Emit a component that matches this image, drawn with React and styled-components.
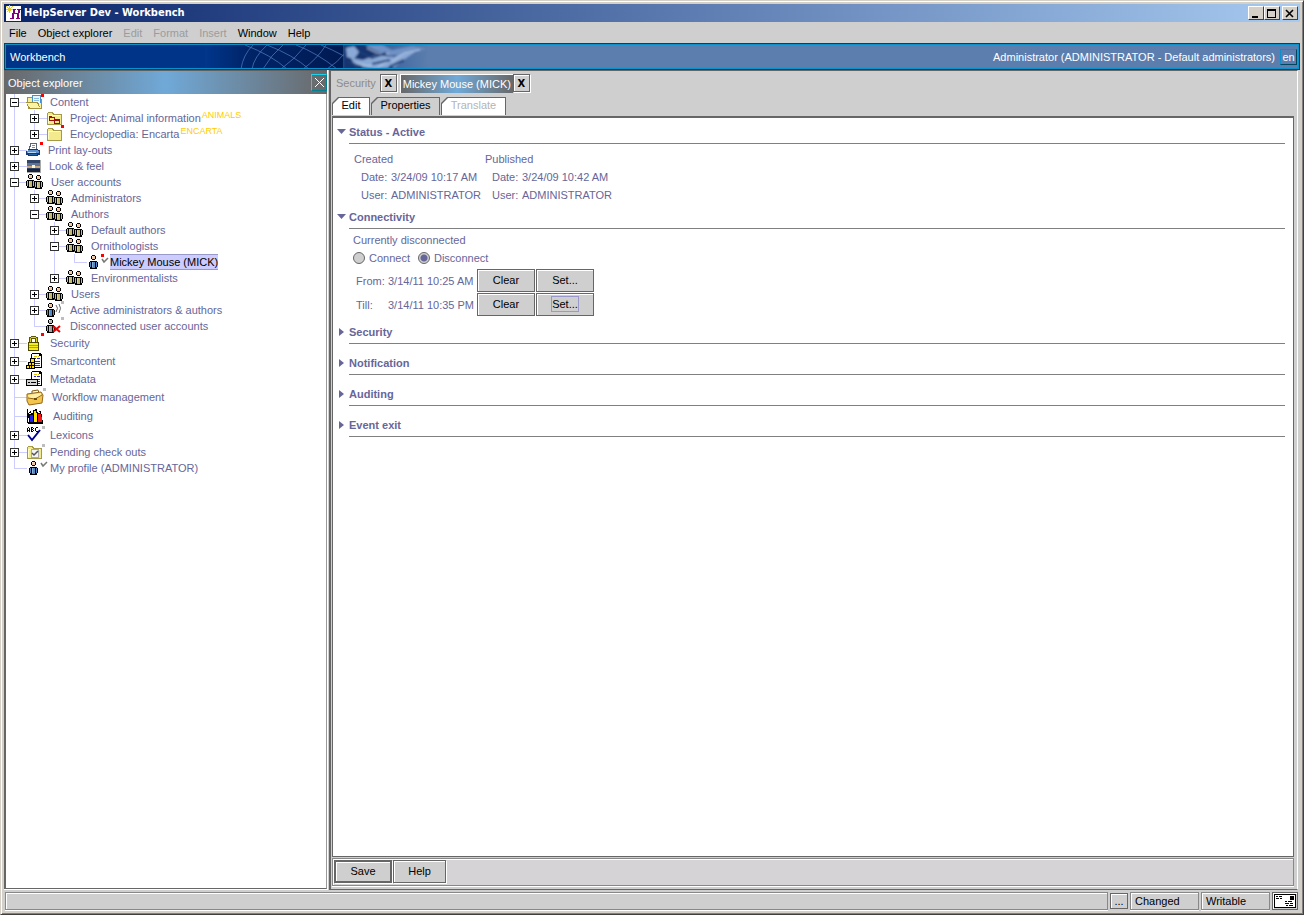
import { useState } from "react";
import styled, { createGlobalStyle, css } from "styled-components";

const tree = [
    {
        label: "Content", icon: "content", open: true, children: [
            { label: "Project: Animal information", code: "ANIMALS", icon: "project", children: [] },
            { label: "Encyclopedia: Encarta", code: "ENCARTA", icon: "folder", children: [] },
        ]
    },
    { label: "Print lay-outs", icon: "printer", children: [] },
    { label: "Look & feel", icon: "look", children: [] },
    {
        label: "User accounts", icon: "group", open: true, children: [
            { label: "Administrators", icon: "group", children: [] },
            {
                label: "Authors", icon: "group", open: true, children: [
                    { label: "Default authors", icon: "group", children: [] },
                    { label: "Ornithologists", icon: "group", open: true, children: [{ label: "Mickey Mouse (MICK)", icon: "userChanged" }] },
                    { label: "Environmentalists", icon: "group", children: [] },
                ]
            },
            { label: "Users", icon: "group", children: [] },
            { label: "Active administrators & authors", icon: "active", children: [] },
            { label: "Disconnected user accounts", icon: "disconnected" },
        ]
    },
    { label: "Security", icon: "lock", size: 18, children: [] },
    { label: "Smartcontent", icon: "smart", size: 18, children: [] },
    { label: "Metadata", icon: "metadata", size: 18, children: [] },
    { label: "Workflow management", icon: "briefcase", size: 18 },
    { label: "Auditing", icon: "books", size: 20 },
    { label: "Lexicons", icon: "lexicon", size: 18, children: [] },
    { label: "Pending check outs", icon: "pending", children: [] },
    { label: "My profile (ADMINISTRATOR)", icon: "user" },
];

const menus = [
    { label: "File" }, { label: "Object explorer" }, { label: "Edit", disabled: true }, { label: "Format", disabled: true },
    { label: "Insert", disabled: true }, { label: "Window" }, { label: "Help" },
];

export default function App() {
    const [selected, setSelected] = useState("Mickey Mouse (MICK)");
    const [connected, setConnected] = useState(false);

    return (
        <Window>
            <GlobalStyle />
            <TitleBar>
                <AppLogo />
                <Title>HelpServer Dev - Workbench</Title>
                <WindowButton aria-label="Minimize"><svg width="10" height="9"><path d="M1 7h6v2H1z" /></svg></WindowButton>
                <WindowButton aria-label="Maximize"><svg width="10" height="9"><path fillRule="evenodd" d="M0 0h9v9H0zM1 2v6h7V2z" /></svg></WindowButton>
                <WindowButton aria-label="Close" $last><svg width="10" height="9"><path d="M1 1l7 7M8 1l-7 7" stroke="#000" strokeWidth="1.6" /></svg></WindowButton>
            </TitleBar>
            <MenuBar>
                {menus.map(menu => <MenuItem key={menu.label} disabled={menu.disabled}>{menu.label}</MenuItem>)}
            </MenuBar>
            <Banner>
                <BannerTitle>Workbench</BannerTitle>
                <BannerArt />
                <BannerUser>Administrator (ADMINISTRATOR - Default administrators)</BannerUser>
                <Language>en</Language>
            </Banner>
            <Body>
                <Explorer>
                    <ExplorerHeader>
                        <ExplorerTitle>Object explorer</ExplorerTitle>
                        <ExplorerClose aria-label="Close explorer">
                            <svg width="11" height="11"><path d="M1 1l9 9M10 1l-9 9" stroke="#fff" /></svg>
                        </ExplorerClose>
                    </ExplorerHeader>
                    <TreePane>
                        <Branch>
                            {tree.map((node, i) => <TreeNode key={node.label} node={node} last={i === tree.length - 1} selected={selected} onSelect={setSelected} />)}
                        </Branch>
                    </TreePane>
                </Explorer>
                <Editor>
                    <Documents>
                        <DocumentTab>Security</DocumentTab>
                        <CloseTab aria-label="Close Security">X</CloseTab>
                        <DocumentTab $active>Mickey Mouse (MICK)</DocumentTab>
                        <CloseTab aria-label="Close Mickey Mouse">X</CloseTab>
                    </Documents>
                    <PageTabs>
                        <PageTab><PageTabFace $size={36} $white>Edit</PageTabFace></PageTab>
                        <PageTab><PageTabFace $size={67}>Properties</PageTabFace></PageTab>
                        <PageTab disabled><PageTabFace $size={63} $white $off>Translate</PageTabFace></PageTab>
                    </PageTabs>
                    <Page>
                        <Section title="Status - Active" open>
                            <StatusBody>
                                <StatusBlock title="Created" date="3/24/09 10:17 AM" />
                                <StatusBlock title="Published" date="3/24/09 10:42 AM" />
                            </StatusBody>
                        </Section>
                        <Section title="Connectivity" open>
                            <ConnectBody>
                                <Line>Currently disconnected</Line>
                                <Line>
                                    <RadioLabel><Radio name="connect" checked={connected} onChange={() => setConnected(true)} />Connect</RadioLabel>
                                    <RadioLabel><Radio name="connect" checked={!connected} onChange={() => setConnected(false)} />Disconnect</RadioLabel>
                                </Line>
                                <Period>
                                    <span>From:</span><span>3/14/11 10:25 AM</span>
                                    <Button>Clear</Button><Button>Set...</Button>
                                    <span>Till:</span><span>3/14/11 10:35 PM</span>
                                    <Button>Clear</Button><Button><Focus>Set...</Focus></Button>
                                </Period>
                            </ConnectBody>
                        </Section>
                        <Section title="Security" />
                        <Section title="Notification" />
                        <Section title="Auditing" />
                        <Section title="Event exit" />
                    </Page>
                    <Actions>
                        <Button $primary>Save</Button>
                        <Button $small>Help</Button>
                    </Actions>
                </Editor>
            </Body>
            <StatusBar>
                <StatusMessage />
                <MoreButton>...</MoreButton>
                <StatusCell>Changed</StatusCell>
                <StatusCell>Writable</StatusCell>
                <MailCell aria-label="Messages">
                    <svg width="22" height="14" shapeRendering="crispEdges">
                        <path d="M0 0h22v14H0z" /><path fill="#fff" d="M1 1h20v12H1z" />
                        <path d="M16 2h4v4h-4zM2 2h2v1H2zM5 2h3v1H5zM2 4h3v1H2zM6 4h2v1H6zM11 7h2v1h-2zM14 7h4v1h-4zM11 9h4v1h-4zM16 9h3v1h-3zM12 11h2v1h-2zM15 11h4v1h-4z" />
                    </svg>
                </MailCell>
            </StatusBar>
        </Window>
    )
}

function TreeNode({ node, last, selected, onSelect }) {
    const [open, setOpen] = useState(!!node.open);
    const { label, code, icon, size = 16, children } = node;

    return (
        <Node $last={last} $size={size}>
            <Row $size={size}>
                <Slot>
                    {children && (
                        <Expander aria-label={open ? `Collapse ${label}` : `Expand ${label}`} onClick={() => setOpen(!open)}>
                            <svg width="9" height="9" shapeRendering="crispEdges">
                                <path fill="#333" d="M0 0h9v9H0z" /><path fill="#fff" d="M1 1h7v7H1z" />
                                <path fill="#000" d={open ? "M2 4h5v1H2z" : "M2 4h5v1H2zM4 2h1v5H4z"} />
                            </svg>
                        </Expander>
                    )}
                </Slot>
                <Icon name={icon} />
                <Label $selected={selected === label} onClick={() => onSelect(label)}>{label}</Label>
                {code && <Code>{code}</Code>}
            </Row>
            {open && children.length > 0 && (
                <Branch $nested>
                    {children.map((child, i) => <TreeNode key={child.label} node={child} last={i === children.length - 1} selected={selected} onSelect={onSelect} />)}
                </Branch>
            )}
        </Node>
    )
}

function Section({ title, open, children }) {
    return (
        <SectionBox>
            <SectionHeader>
                <svg width="12" height="11" fill="#666699">
                    <path d={open ? "M0 2h9L4.500 7z" : "M2 1v8l5-4z"} />
                </svg>
                <SectionTitle>{title}</SectionTitle>
            </SectionHeader>
            {children}
        </SectionBox>
    )
}

function StatusBlock({ title, date }) {
    return (
        <div>
            <Line>{title}</Line>
            <Facts>
                <dt>Date:</dt><dd>{date}</dd>
                <dt>User:</dt><dd>ADMINISTRATOR</dd>
            </Facts>
        </div>
    )
}

function AppLogo() {
    return (
        <svg width="16" height="16" shapeRendering="crispEdges">
            <path fill="#fff" d="M0 1h15v15H0z" />
            <path fill="#800080" d="M6 4h4v1H6zM11 4h4v1h-4zM7 5h2v3H7zM12 5h2v3h-2zM6 8h7v1H6zM6 9h2v4H6zM11 8h2v5h-2zM4 13h4v1H4zM10 13h4v1h-4z" />
            <path fill="#e0cf2c" d="M3 0h1v3H3zM0 4h3v1H0zM4 4h3v1H4zM3 5h1v3H3zM1 2h1v1H1zM5 2h1v1H5zM1 6h1v1H1zM6 1h1v1H6zM0 1h1v1H0zM2 3h3v3H2z" />
        </svg>
    )
}

function BannerArt() {
    return (
        <ArtBox width="260" height="23" viewBox="0 0 260 23" aria-hidden="true">
            <defs>
                <linearGradient id="globe"><stop offset="0" stopColor="#00368c" /><stop offset="0.3" stopColor="#002468" /><stop offset="1" stopColor="#001a52" /></linearGradient>
                <linearGradient id="hand"><stop offset="0" stopColor="#22498c" /><stop offset="0.7" stopColor="#5b7eae" /></linearGradient>
                <filter id="soft"><feGaussianBlur stdDeviation="0.9" /></filter>
            </defs>
            <path fill="url(#globe)" d="M0 0h140v24H0z" />
            <path fill="url(#hand)" d="M138 0h122v24H138z" />
            <g fill="none" stroke="#4d78bd" strokeOpacity="0.75">
                <path d="M36 24Q38 10 48 0M47 24Q49 12 62 0M58 24Q66 10 78 0M76 24Q90 14 101 0M98 24Q112 14 121 0M122 24Q133 17 139 9" />
                <path d="M40 0Q66 10 82 24M62 0Q88 10 104 24M91 0Q112 8 132 24M116 0Q128 5 139 11" />
            </g>
            <g filter="url(#soft)">
                <path fill="#14356f" d="M139 0h28l14 8 18 4-12 12h-48z" />
                <path fill="#8aa9d6" d="M141 3l8-2 5 6-5 7-7-2zM146 13l12 2 13-5 18 2 10-5 14-2-13 9-10 8-20 2-20-3z" />
                <path fill="#6f91c4" d="M160 0h18l9 5 20-4 14 3-12 3-23 4-15-5z" />
                <path fill="none" stroke="#bed0e9" d="M150 18l14 3 13-5M162 3l10 5 12 1M187 17l12-9 16-3M173 22l10-6" />
                <path fill="none" stroke="#1c3d76" strokeWidth="2" d="M155 7l12 6 14-5M167 19l18-4M143 17l14 5M184 22l15-7" />
            </g>
        </ArtBox>
    )
}

// bottom-aligned person, nine pixels wide
function Person({ x = 0, fill = "#c2bb76", head = "#f6c79c" }) {
    return (
        <g transform={`translate(${x} 0)`}>
            <path fill="#000" d="M3 0h3v1H3zM2 1h1v3H2zM6 1h1v3H6zM3 4h3v1H3zM1 6h7v1H1zM0 7h1v5H0zM8 7h1v5H8zM1 7h7v7H1z" />
            <path fill={head} d="M3 1h3v3H3z" /><path fill="#fff2de" d="M3 1h1v1H3z" />
            <path fill={fill} d="M1 7h1v5H1zM3 7h3v6H3zM7 7h1v5H7z" />
            <path fill="#fff" fillOpacity="0.35" d="M3 7h1v5H3z" />
        </g>
    )
}

function Folder() {
    return (
        <g>
            <path fill="#a49a48" d="M2 2h5l1 2h8v11H1V4z" />
            <path fill="#f2ea8c" d="M2 3h4l1 2h8v9H2z" />
            <path fill="#fffcc4" d="M2 5h12v1H2zM2 6h1v7H2z" />
        </g>
    )
}

const Dot = ({ x = 15, y = 0, gray }) => <path fill={gray ? "#bdbdbd" : "#ff0000"} d={`M${x} ${y}h3v3h-3z`} />;
const Check = ({ x, y }) => <path fill="none" stroke="#777" strokeWidth="1.5" shapeRendering="auto" d={`M${x} ${y + 1}l2 3 4-4`} />;

const Sheet = () => (
    <g>
        <path fill="#000" d="M6 0h8l2 2v13H5V1z" /><path fill="#fff" d="M6 1h7v2h2v11H6z" />
        <path fill="#2424ff" d="M8 5h2v1H8zM11 5h3v1h-3zM8 8h6v1H8zM8 10h6v1H8zM8 12h6v1H8z" />
        <path fill="#e0bd00" d="M8 3h3v1H8zM12 3h1v1h-1z" />
    </g>
);

const icons = {
    content: [24, (
        <>
            <path fill="#a4923a" d="M1 3h5l2 2h8v10H2z" /><path fill="#f6f0a0" d="M2 4h3l2 2h8v8H2z" />
            <path fill="#4a8fc8" d="M6 1h9v8H6z" /><path fill="#e9f6ff" d="M7 2h7v8H7z" /><path fill="#8bbbe0" d="M8 4h5v1H8zM8 6h5v1H8z" />
            <path fill="#a4923a" d="M0 8h12l3 7H3z" /><path fill="#fbf3a4" d="M1 9h10l3 5H4z" /><Dot />
        </>
    )],
    project: [24, <><Folder /><path fill="#9a1010" d="M3 6h3v1h3v2h5v5H8v-3H3z" /><path fill="#fff06a" d="M4 8h4v2H4zM9 11h4v2H9z" /></>],
    folder: [24, <><Folder /><Dot y={-1} /></>],
    printer: [22, (
        <>
            <path fill="#596474" d="M4 1h7v7H3z" /><path fill="#fff" d="M5 2h5v6H4z" /><path fill="#728db0" d="M6 3h3v1H6zM6 5h3v1H6z" />
            <path fill="#17376e" d="M2 7h10v1h2v5h-2v1H2v-1H0V9h2z" /><path fill="#5c92d0" d="M2 8h10v1h1v2H1V9h1z" /><path fill="#bad9f5" d="M2 10h8v1H2z" />
            <path fill="#2465ae" d="M3 12h8v1H3z" /><Dot x={14} />
        </>
    )],
    look: [23, (
        <>
            <path fill="#304468" d="M1 2h13v12H1z" /><path fill="#5f7396" d="M1 5h13v3H1z" /><path fill="#c9a582" d="M1 8h13v2H1z" />
            <path fill="#fff4c2" d="M6 7h3v3H6z" /><path fill="#1a2138" d="M1 11h13v3H1z" /><path fill="#aaa" d="M14 2h1v13H1v-1h13z" />
        </>
    )],
    group: [25, <><Person /><path fill="#c33c24" d="M8 8h2v6H8z" /><g transform="translate(8 1)"><Person /></g></>],
    userChanged: [24, <><g transform="translate(3 1)"><Person fill="#4f88c2" /></g><Dot x={15} y={0} /><Check x={16} y={4} /></>],
    user: [24, <><g transform="translate(3 1)"><Person fill="#4f88c2" /></g><Check x={15} y={2} /></>],
    active: [24, <><g transform="translate(0 1)"><Person fill="#4f88c2" /></g><path fill="none" stroke="#666" shapeRendering="auto" d="M10 3q3 3 0 7M13 2q3 4 0 9" /><Dot gray x={15} y={-1} /></>],
    disconnected: [24, <><g transform="translate(0 1)"><Person fill="#a4a4a4" head="#bbb" /></g><path stroke="#e50000" strokeWidth="2" shapeRendering="auto" d="M7 8l7 6M14 8l-7 6" /><Dot gray x={15} y={-1} /></>],
    lock: [24, (
        <>
            <path fill="#5c5600" d="M5 1h5v1h2v6H3V2h2z" /><path fill="#dcd420" d="M5 2h5v1H5zM4 3h1v5H4zM10 3h1v5h-1z" /><path fill="#fff" d="M6 4h3v3H6z" />
            <path fill="#4f4900" d="M2 7h11v9H2z" /><path fill="#f5ed1a" d="M3 8h9v7H3z" /><path fill="#ada500" d="M3 10h9v1H3zM3 12h9v1H3z" /><Dot y={-2} />
        </>
    )],
    smart: [24, <><Sheet /><path fill="#000" d="M4 5h5v11H0v-4h2V9h2z" /><path fill="#ffdf00" d="M5 6h3v3H5zM3 10h2v2H3zM6 10h2v2H6zM1 13h2v2H1zM4 13h1v2H4zM6 13h2v2H6z" /></>],
    metadata: [24, <><Sheet /><path fill="#000" d="M0 8h12v7H0z" /><path fill="#d3d3d3" d="M1 9h10v5H1z" /><path fill="#000" d="M2 11h2v1H2zM5 11h5v1H5z" /></>],
    briefcase: [26, (
        <g shapeRendering="auto">
            <path fill="none" stroke="#865b12" d="M6 5V2l6-1 1 3" /><path fill="#f2c64c" stroke="#976719" d="M1 5l14-2 2 3-1 8-13 2-2-4z" />
            <path fill="#fff0a3" d="M2 6l13-2v3l-6 3-6-1z" /><path fill="none" stroke="#976719" d="M2 9l7 1 7-4" /><path fill="#704c0e" d="M8 9h3v2H8z" /><Dot gray x={17} y={-1} />
        </g>
    )],
    books: [27, (
        <>
            <path fill="#000" d="M1 1h1v13h15v2H2l-1-2zM2 5l3-2v2h2V2l4-1v3l4-1 2 12H3z" />
            <path fill="#2020e8" d="M4 7h3v7H4z" /><path fill="#ffe500" d="M8 3h2v2h1v9H8z" /><path fill="#f01818" d="M12 6h3v3h1v5h-4z" />
            <path fill="#fff" d="M3 5h2v1H3zM12 4h2v1h-2z" />
        </>
    )],
    lexicon: [24, (
        <>
            <path fill="#000" d="M2 0h1v1H2zM1 1h1v4H1zM3 1h1v4H3zM2 3h1v1H2zM5 0h2v1H5zM5 1h1v4H5zM7 1h1v1H7zM6 2h1v1H6zM7 3h1v1H7zM6 4h1v1H6zM10 0h2v1h-2zM9 1h1v3H9zM10 4h2v1h-2z" />
            <path fill="none" stroke="#000090" strokeWidth="2" shapeRendering="auto" d="M2 8l4 5 8-10" /><Dot gray x={16} y={-1} />
        </>
    )],
    pending: [24, <><Folder /><path fill="#a8a8a8" d="M5 5h8v9H5z" /><path fill="#f4f4f4" d="M6 6h6v7H6z" /><path fill="none" stroke="#555" strokeWidth="1.500" shapeRendering="auto" d="M6 9l2 2 4-4" /><Dot gray x={16} y={0} /></>],
};

function Icon({ name }) {
    const [width, drawing] = icons[name];
    return <IconSvg width={width} height="16" shapeRendering="crispEdges" aria-hidden="true">{drawing}</IconSvg>
}

const GlobalStyle = createGlobalStyle`
    * {
        box-sizing: border-box;
    }
    body {
        margin: 0;
        font-family: "Liberation Sans", Arial, sans-serif;
        font-size: 11px;
        line-height: 16px;
        color: #666699;
    }
    button {
        font: inherit;
        padding: 0;
        border: 0;
        background: none;
        white-space: nowrap;
    }
    ul, dl, dd, h1, h2 {
        margin: 0;
        padding: 0;
        list-style: none;
    }
    svg {
        flex: none;
        display: block;
    }
`
const Window = styled.div`
    height: 100vh;
    display: flex;
    flex-direction: column;
    background: #cfcfcf;
    border: 1px solid #d4d0c8;
    border-right-color: #404040;
    border-bottom-color: #404040;
    box-shadow: inset 1px 1px #fff, inset -1px -1px #808080, inset 0 0 0 3px #d4d0c8;
    padding: 3px;
`
const TitleBar = styled.header`
    height: 18px;
    flex: none;
    display: flex;
    align-items: center;
    padding: 0 2px;
    background: linear-gradient(90deg, #0a246a, #a6caf0);
`
const Title = styled.h1`
    flex: 1;
    padding-left: 2px;
    line-height: 18px;
    font-family: "DejaVu Sans Condensed", "DejaVu Sans", Verdana, sans-serif;
    font-size: 11px;
    font-weight: bold;
    color: #fff;
`
const WindowButton = styled.button`
    width: 16px;
    height: 14px;
    display: flex;
    align-items: center;
    justify-content: center;
    background: #d4d0c8;
    border: 1px solid #fff;
    border-right-color: #404040;
    border-bottom-color: #404040;
    margin-left: ${({ $last }) => $last ? "2px" : "0"};
`
const MenuBar = styled.nav`
    height: 21px;
    flex: none;
    display: flex;
    align-items: center;
    gap: 11px;
    padding: 0 5px;
`
const MenuItem = styled.button`
    color: #000;

    &:disabled {
        color: #9c9c9c;
    }
`
const Banner = styled.div`
    height: 27px;
    flex: none;
    display: flex;
    align-items: center;
    color: #fff;
    background: linear-gradient(90deg, #003488 236px, #5b7eae 440px);
    border: 1px solid #00465f;
    box-shadow: inset 0 0 0 1px #0b90cc;
`
const BannerTitle = styled.h2`
    width: 200px;
    padding-left: 5px;
    font-size: 11px;
    font-weight: normal;
`
const ArtBox = styled.svg`
    min-width: 0;
`
const BannerUser = styled.span`
    flex: 1;
    text-align: right;
    padding-right: 5px;
    white-space: nowrap;
`
const Language = styled.button`
    width: 17px;
    height: 16px;
    line-height: 14px;
    margin-right: 2px;
    color: #fff;
    border: 1px solid #0b90cc;
    border-right-color: #00465f;
    border-bottom-color: #00465f;
`
const Body = styled.div`
    flex: 1;
    min-height: 0;
    display: flex;
`
const Explorer = styled.aside`
    width: 324px;
    flex: none;
    display: flex;
    flex-direction: column;
    margin-bottom: 1px;
    border-right: 1px solid #fff;
    border-bottom: 1px solid #fff;
`
const metal = css`
    background: linear-gradient(90deg, #686868, #70a9d8 50%, #686868);
`
const ExplorerHeader = styled.div`
    height: 24px;
    display: flex;
    align-items: center;
    padding: 0 0 0 4px;
    color: #fff;
    border-top: 1px solid #606060;
    ${metal}
`
const ExplorerTitle = styled.h2`
    flex: 1;
    font-size: 11px;
    font-weight: normal;
`
const ExplorerClose = styled.button`
    width: 16px;
    height: 17px;
    display: flex;
    align-items: center;
    justify-content: center;
    border: 1px solid #19d3ee;
    border-right-color: #008090;
    border-bottom-color: #008090;
`
const TreePane = styled.div`
    flex: 1;
    overflow: auto;
    background: #fff;
    padding-left: 4px;
    border-left: 2px solid #666;
    border-right: 1px solid #999;
    border-bottom: 1px solid #666;
`
const Branch = styled.ul`
    padding-left: ${({ $nested }) => $nested ? "20px" : "0"};
`
const Node = styled.li`
    background: linear-gradient(#ccccff, #ccccff) 4px 0 no-repeat;
    background-size: 1px ${({ $last, $size }) => $last ? `${$size / 2}px` : "100%"};
`
const Row = styled.div`
    height: ${({ $size }) => $size}px;
    display: flex;
    align-items: center;
    background: linear-gradient(#ccccff, #ccccff) 4px 50% / 13px 1px no-repeat;
`
const Slot = styled.span`
    width: 16px;
    flex: none;
`
const Expander = styled.button`
    display: block;
`
const IconSvg = styled.svg`
    overflow: visible;
`
const Label = styled.button`
    height: 16px;
    line-height: 14px;
    border: 1px solid transparent;
    border-width: 1px 0;
    color: #666699;
    ${({ $selected }) => $selected && css`
        color: #000;
        background: #ccccff;
        border-color: #9999cc;
    `}
`
const Code = styled.span`
    align-self: flex-start;
    margin-left: 1px;
    font-size: 9px;
    line-height: 10px;
    color: #ffcc00;
`
const Editor = styled.main`
    flex: 1;
    min-width: 0;
    margin: 0 2px 1px 1px;
    display: flex;
    flex-direction: column;
    padding: 2px 3px 2px 1px;
    border: 1px solid #666;
    border-left-width: 2px;
    border-right-color: #fff;
`
const Documents = styled.div`
    height: 20px;
    display: flex;
    align-items: center;
`
const DocumentTab = styled.button`
    height: 19px;
    padding: 0 4px;
    color: #8c8c8c;
    ${({ $active }) => $active && css`
        color: #fff;
        margin-left: 3px;
        border: 1px solid #fff;
        border-width: 1px 0 0 1px;
        padding: 0 2px;
        line-height: 16px;
        ${metal}
    `}
`
const CloseTab = styled.button`
    width: 17px;
    height: 18px;
    line-height: 18px;
    color: #000;
    font-family: "DejaVu Sans", Verdana, sans-serif;
    font-weight: bold;
    font-size: 10px;
    background: #cfcfcf;
    border: 1px solid #666;
    box-shadow: inset 1px 1px #fff, 1px 1px #fff;
`
const PageTabs = styled.div`
    display: flex;
    align-items: flex-end;
    height: 22px;
    gap: 1px;
`
const tabShape = css`
    clip-path: polygon(0 100%, 0 6px, 6px 0, 100% 0, 100% 100%);
`
const PageTab = styled.button`
    padding: 1px 1px 0 1px;
    background: #666;
    ${tabShape}
`
const PageTabFace = styled.span`
    display: block;
    width: ${({ $size }) => $size}px;
    height: 17px;
    line-height: 15px;
    color: ${({ $off }) => $off ? "#b4b4b4" : "#000"};
    background: ${({ $white }) => $white ? "#fff" : "#cfcfcf"};
    ${tabShape}
`
const Page = styled.div`
    flex: 1;
    min-height: 0;
    overflow: auto;
    margin-top: 1px;
    padding: 3px 8px 0 4px;
    background: #fff;
    border: 1px solid #666;
    border-top-width: 2px;
`
const SectionBox = styled.section`
    & + &:nth-child(n + 4) {
        margin-top: 8px;
    }
`
const SectionHeader = styled.div`
    display: flex;
    align-items: center;
`
const SectionTitle = styled.h2`
    flex: 1;
    height: 23px;
    line-height: 22px;
    font-size: 11px;
    border-bottom: 1px solid #808080;
`
const StatusBody = styled.div`
    display: grid;
    grid-template-columns: 131px 131px;
    padding: 6px 0 2px 17px;
`
const Line = styled.div`
    height: 18px;
    line-height: 18px;
    display: flex;
    align-items: center;
    gap: 8px;
`
const Facts = styled.dl`
    display: grid;
    grid-template-columns: 30px auto;
    padding-left: 7px;
    line-height: 18px;
    white-space: nowrap;
`
const ConnectBody = styled.div`
    padding: 2px 0 4px 16px;
`
const RadioLabel = styled.label`
    display: flex;
    align-items: center;
    gap: 4px;
`
const Radio = styled.input.attrs({ type: "radio" })`
    appearance: none;
    width: 12px;
    height: 12px;
    margin: 0;
    border: 1px solid #666;
    border-radius: 50%;
    background: #cfcfcf;

    &:checked {
        background: radial-gradient(circle, #666699 3px, #cfcfcf 4px);
    }
`
const Period = styled.div`
    display: grid;
    grid-template-columns: 31px 88px 58px 58px;
    column-gap: 1px;
    grid-auto-rows: 24px;
    align-items: start;
    line-height: 24px;
    margin-top: 2px;
    padding-left: 3px;
    white-space: nowrap;
`
const Button = styled.button`
    width: ${({ $small }) => $small ? "53px" : "58px"};
    height: 23px;
    line-height: 19px;
    color: #000;
    background: #cfcfcf;
    border: ${({ $primary }) => $primary ? "2px" : "1px"} solid #666;
    box-shadow: inset 1px 1px #fff, 1px 1px #fff;
`
const Focus = styled.span`
    display: inline-block;
    line-height: 14px;
    outline: 1px solid #9999cc;
`
const Actions = styled.div`
    height: 28px;
    flex: none;
    display: flex;
    align-items: flex-start;
    gap: 1px;
    margin: 1px 0;
    padding: 1px;
    background: #d5d3d6;
    border: 1px solid #888;
    box-shadow: inset 1px 1px #fff, 0 1px #fff;
`
const StatusBar = styled.footer`
    height: 20px;
    flex: none;
    display: flex;
    align-items: center;
    gap: 2px;
    padding: 0 2px 0 1px;
    color: #000;
`
const StatusMessage = styled.div`
    flex: 1;
    height: 18px;
    border: 1px solid #888;
    box-shadow: inset 1px 1px #fff, 0 1px #fff;
`
const MoreButton = styled.button`
    width: 18px;
    height: 16px;
    line-height: 12px;
    color: #000;
    border: 1px solid #666;
    box-shadow: inset 1px 1px #fff;
`
const StatusCell = styled.div`
    width: 69px;
    height: 18px;
    padding-left: 4px;
    border: 1px solid #888;
    box-shadow: inset 1px 1px #fff, 0 1px #fff;
`
const MailCell = styled.button`
    width: 26px;
    height: 18px;
    display: flex;
    align-items: center;
    justify-content: center;
    border: 1px solid #666;
    box-shadow: inset 1px 1px #fff;
`
